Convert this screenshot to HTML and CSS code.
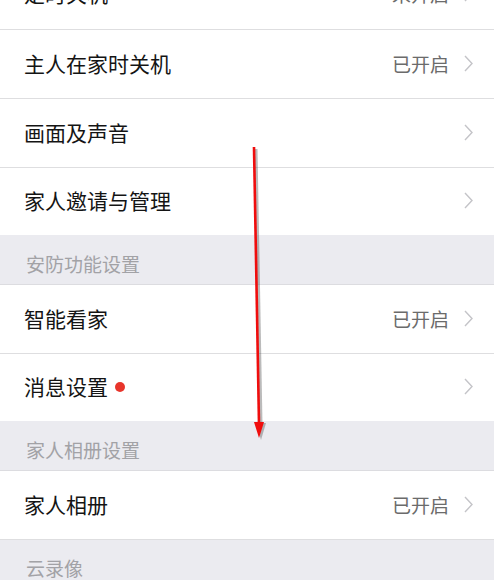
FILE: index.html
```html
<!DOCTYPE html>
<html lang="zh">
<head>
<meta charset="utf-8">
<link rel="stylesheet" href="styles.css">
</head>
<body>
<div class="page">
  <div class="list">
    <div class="row row-cut"><span class="label">定时关机</span><span class="value">未开启</span><svg class="chev" viewBox="0 0 9 17"><polyline points="1,1 8,8.5 1,16"/></svg></div>
    <div class="row"><span class="label">主人在家时关机</span><span class="value">已开启</span><svg class="chev" viewBox="0 0 9 17"><polyline points="1,1 8,8.5 1,16"/></svg></div>
    <div class="row"><span class="label">画面及声音</span><span class="value"></span><svg class="chev" viewBox="0 0 9 17"><polyline points="1,1 8,8.5 1,16"/></svg></div>
    <div class="row last"><span class="label">家人邀请与管理</span><span class="value"></span><svg class="chev" viewBox="0 0 9 17"><polyline points="1,1 8,8.5 1,16"/></svg></div>
  </div>
  <div class="header">安防功能设置</div>
  <div class="list">
    <div class="row"><span class="label">智能看家</span><span class="value">已开启</span><svg class="chev" viewBox="0 0 9 17"><polyline points="1,1 8,8.5 1,16"/></svg></div>
    <div class="row last"><span class="label">消息设置</span><span class="dot"></span><span class="value"></span><svg class="chev" viewBox="0 0 9 17"><polyline points="1,1 8,8.5 1,16"/></svg></div>
  </div>
  <div class="header">家人相册设置</div>
  <div class="list">
    <div class="row"><span class="label">家人相册</span><span class="value">已开启</span><svg class="chev" viewBox="0 0 9 17"><polyline points="1,1 8,8.5 1,16"/></svg></div>
  </div>
  <div class="header header-open">云录像</div>

  <svg class="arrow" viewBox="0 0 494 580" width="494" height="580">
    <g class="arrow-shadow">
      <line x1="256" y1="149" x2="261" y2="424"/>
      <polygon points="256,423 266,423 261,440"/>
    </g>
    <g class="arrow-red">
      <line x1="254" y1="147" x2="259" y2="424"/>
      <polygon points="254,422 264,422 259,438"/>
    </g>
  </svg>
</div>
</body>
</html>
```
FILE: styles.css
```css
html, body {
  margin: 0;
  padding: 0;
}
body {
  background: #ebebf0;
  font-family: "Noto Sans CJK SC", "Noto Sans", sans-serif;
  overflow: hidden;
}
.page {
  position: relative;
  width: 494px;
  height: 580px;
  overflow: hidden;
}
.list {
  background: #ffffff;
}
.row {
  display: flex;
  align-items: center;
  box-sizing: border-box;
  height: 69px;
  padding: 0 21px 2px 24px;
  border-bottom: 1px solid #dedee0;
}
.row.last {
  height: 67px;
  border-bottom: none;
}
.row-cut {
  margin-top: -40px;
  height: 70px;
}
.label {
  font-size: 21px;
  line-height: 21px;
  color: #141414;
}
.dot {
  width: 10px;
  height: 10px;
  border-radius: 50%;
  background: #e8352b;
  margin-left: 7px;
}
.value {
  margin-left: auto;
  font-size: 19px;
  line-height: 19px;
  color: #6b6b6b;
  margin-right: 15px;
}
.chev {
  width: 9px;
  height: 17px;
  flex: none;
}
.chev polyline {
  fill: none;
  stroke: #c4c4c8;
  stroke-width: 1.4;
}
.header {
  box-sizing: border-box;
  height: 50px;
  display: flex;
  align-items: flex-end;
  padding: 0 0 11px 26px;
  font-size: 19px;
  line-height: 19px;
  color: #a2a2a6;
  border-bottom: 1px solid #dcdce0;
}
.header-open {
  border-bottom: none;
  height: 60px;
  padding-bottom: 23px;
}
.arrow {
  position: absolute;
  left: 0;
  top: 0;
  pointer-events: none;
}
.arrow-shadow line {
  stroke: rgba(60, 60, 60, 0.35);
  stroke-width: 3;
}
.arrow-shadow polygon {
  fill: rgba(60, 60, 60, 0.35);
}
.arrow-red line {
  stroke: #f00d0d;
  stroke-width: 2.6;
}
.arrow-red polygon {
  fill: #f00d0d;
}
```
